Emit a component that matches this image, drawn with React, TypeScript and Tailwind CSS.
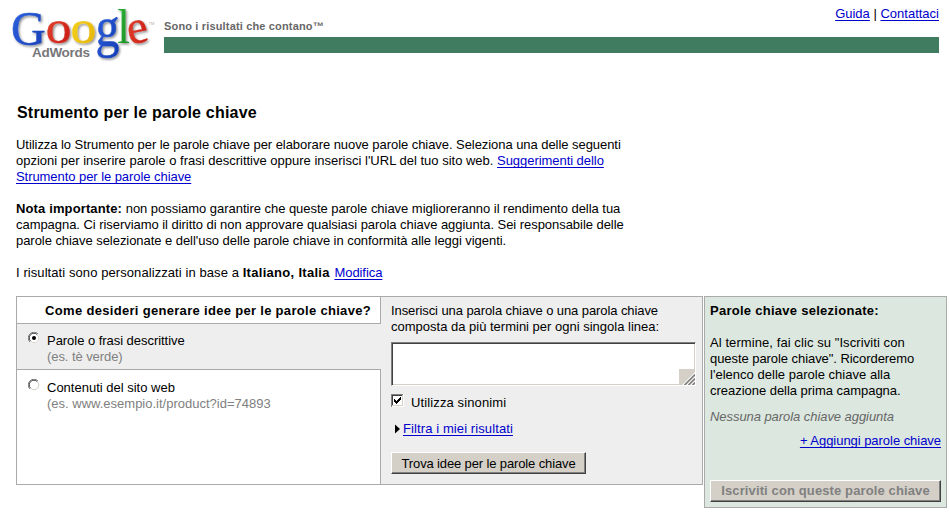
import { ReactNode } from "react";
import clsx from "clsx";

interface LogoLetter {
  char: string;
  color: string;
  stroke: number;
  transform: string;
}

const logoLetters: LogoLetter[] = [
  { char: "G", color: "url(#blue)", stroke: 0.5, transform: "translate(11 44.8) scale(0.98 1)" },
  { char: "o", color: "url(#red)", stroke: 0.4, transform: "translate(45.7 43) scale(1.05 0.96)" },
  { char: "o", color: "url(#yellow)", stroke: 0.4, transform: "translate(70.6 43) scale(1.05 0.96)" },
  { char: "g", color: "url(#blue)", stroke: 0.4, transform: "translate(95.5 46.3) scale(0.98 1.15)" },
  { char: "l", color: "url(#green)", stroke: 0.1, transform: "translate(117.3 43.2) scale(0.93 0.97)" },
  { char: "e", color: "url(#red)", stroke: 0.4, transform: "translate(129.4 44.5) rotate(-11) scale(0.96)" },
];

const gradients = [
  { id: "blue", from: "#3166e2", to: "#143bb4" },
  { id: "red", from: "#ea4a35", to: "#c4160f" },
  { id: "yellow", from: "#fad823", to: "#e4b000" },
  { id: "green", from: "#35b53b", to: "#128d1e" },
];

function Logo() {
  return (
    <svg width="164" height="66" viewBox="0 0 164 66" className="block overflow-visible">
      <defs>
        {gradients.map((g) => (
          <linearGradient id={g.id} key={g.id} x1="0" y1="0" x2="1" y2="1">
            <stop offset="0" stopColor={g.from} />
            <stop offset="1" stopColor={g.to} />
          </linearGradient>
        ))}
        <filter id="shadow" x="-20%" y="-20%" width="150%" height="150%">
          <feDropShadow dx="1.3" dy="1.5" stdDeviation="0.8" floodColor="#000" floodOpacity="0.45" />
        </filter>
      </defs>
      <text
        x="32"
        y="57"
        textLength="58"
        fontSize="13.5"
        fontWeight="bold"
        fill="#77777b"
        fontFamily="Liberation Sans, sans-serif"
      >
        AdWords
      </text>
      <g fontFamily="Liberation Serif, serif" fontSize="49" filter="url(#shadow)">
        {logoLetters.map((letter, index) => (
          <text
            key={index}
            transform={letter.transform}
            fill={letter.color}
            stroke={letter.color}
            strokeWidth={letter.stroke}
          >
            {letter.char}
          </text>
        ))}
      </g>
      <text x="148.5" y="25" fontSize="4" fill="#aaa" fontFamily="Liberation Sans, sans-serif">
        TM
      </text>
    </svg>
  );
}

function TextLink({ children, className }: { children: ReactNode; className?: string }) {
  return (
    <a
      href="#"
      className={clsx(
        "text-[#0000cc] underline decoration-1 underline-offset-2 [text-decoration-skip-ink:none]",
        className
      )}
    >
      {children}
    </a>
  );
}

function Radio({ checked }: { checked?: boolean }) {
  return (
    <svg width="12" height="12" viewBox="0 0 12 12" className="block shrink-0">
      <circle cx="6" cy="6" r="5.5" fill="#fff" />
      <path d="M1.9 10.1A5.5 5.5 0 0 1 10.1 1.9" fill="none" stroke="#808080" />
      <path d="M2.6 9.2A4.5 4.5 0 0 1 9.2 2.6" fill="none" stroke="#404040" />
      <path d="M9.4 2.8A4.5 4.5 0 0 1 2.8 9.4" fill="none" stroke="#d4d0c8" />
      {checked && <circle cx="6" cy="6" r="2" fill="#000" />}
    </svg>
  );
}

interface OptionProps {
  title: string;
  example: string;
  checked?: boolean;
}

function Option({ title, example, checked }: OptionProps) {
  return (
    <label className="flex pl-[11px]">
      <Radio checked={checked} />
      <span className="flex flex-col pt-px pl-[7px] leading-4">
        <span className={clsx(checked && "tracking-[-0.04px]")}>{title}</span>
        <span className={clsx("text-[#808080]", checked && "tracking-[-0.07px]")}>{example}</span>
      </span>
    </label>
  );
}

function Button({ disabled, children }: { disabled?: boolean; children: ReactNode }) {
  return (
    <button
      disabled={disabled}
      className={clsx(
        "block h-[22px] whitespace-nowrap border border-t-white border-l-white border-r-[#404040] border-b-[#404040] bg-[#d4d0c8] text-center leading-[20px] shadow-[inset_-1px_-1px_0_#808080]",
        disabled
          ? "w-[231px] font-bold tracking-[0.12px] text-[#808080]"
          : "w-[195px] pt-px tracking-[-0.13px] text-black"
      )}
    >
      {children}
    </button>
  );
}

function Header() {
  return (
    <header className="flex h-[66px]">
      <Logo />
      <div className="flex w-[775px] flex-col">
        <div className="flex h-[37px] justify-between">
          <span className="pt-[19px] text-[11px] leading-[14px] font-bold tracking-[0.16px] text-[#676767]">
            Sono i risultati che contano™
          </span>
          <span className="pt-[6px] leading-4">
            <TextLink>Guida</TextLink> | <TextLink>Contattaci</TextLink>
          </span>
        </div>
        <div className="h-4 bg-[#407d60]" />
      </div>
    </header>
  );
}

function Intro() {
  return (
    <section className="pt-[38px] pl-4 leading-4 whitespace-nowrap">
      <h1 className="pl-px text-base leading-[18px] font-bold tracking-[0.2px]">Strumento per le parole chiave</h1>
      <p className="pt-[15px]">
        <span className="tracking-[-0.056px]">
          Utilizza lo Strumento per le parole chiave per elaborare nuove parole chiave. Seleziona una delle seguenti
        </span>
        <br />
        <span>opzioni per inserire parole o frasi descrittive oppure inserisci l'URL del tuo sito web. </span>
        <TextLink className="tracking-[-0.05px]">Suggerimenti dello</TextLink>
        <br />
        <TextLink className="tracking-[-0.06px]">Strumento per le parole chiave</TextLink>
      </p>
      <p className="pt-4">
        <b className="tracking-[0.13px]">Nota importante:</b>
        <span className="tracking-[-0.03px]">
          {" "}
          non possiamo garantire che queste parole chiave miglioreranno il rendimento della tua
        </span>
        <br />
        <span className="tracking-[-0.047px]">
          campagna. Ci riserviamo il diritto di non approvare qualsiasi parola chiave aggiunta. Sei responsabile delle
        </span>
        <br />
        <span className="tracking-[-0.05px]">
          parole chiave selezionate e dell'uso delle parole chiave in conformità alle leggi vigenti.
        </span>
      </p>
      <p className="pt-4">
        <span className="tracking-[0.08px]">I risultati sono personalizzati in base a </span>
        <b className="tracking-[0.3px]">Italiano, Italia</b>{" "}
        <TextLink className="ml-px tracking-[-0.06px]">Modifica</TextLink>
      </p>
    </section>
  );
}

function MethodColumn() {
  return (
    <div className="flex w-[364px] flex-col">
      <h2 className="h-[27px] border-r border-b border-[#aaa] bg-white pt-[6px] pr-[9px] text-right leading-4 font-bold tracking-[0.31px]">
        Come desideri generare idee per le parole chiave?
      </h2>
      <div className="h-[45px] pt-2">
        <Option title="Parole o frasi descrittive" example="(es. tè verde)" checked />
      </div>
      <div className="grow border-t border-r border-[#aaa] bg-white pt-[9px]">
        <Option title="Contenuti del sito web" example="(es. www.esempio.it/product?id=74893" />
      </div>
    </div>
  );
}

function KeywordColumn() {
  return (
    <div className="flex flex-col items-start pt-[6px] pl-[10px] leading-4">
      <p>
        <span className="tracking-[-0.085px]">Inserisci una parola chiave o una parola chiave</span>
        <br />
        composta da più termini per ogni singola linea:
      </p>
      <div className="mt-[7px] flex h-[44px] w-[305px] items-end justify-end border border-t-[#808080] border-l-[#808080] border-r-white border-b-white bg-white shadow-[inset_1px_1px_0_#404040,inset_-1px_-1px_0_#d4d0c8]">
        <svg width="16" height="16" viewBox="0 0 16 16">
          <path d="M0 0H16V16H0Z" fill="#d4d0c8" />
          <path d="M4 16L16 4M8 16L16 8M12 16L16 12" stroke="#fff" strokeWidth="1.2" />
          <path d="M5.5 16L16 5.5M9.5 16L16 9.5M13.5 16L16 13.5" stroke="#808080" strokeWidth="1.6" />
        </svg>
      </div>
      <label className="flex pt-[8px]">
        <svg width="13" height="13" viewBox="0 0 13 13" shapeRendering="crispEdges">
          <path d="M0 0H13V13H0Z" fill="#fff" />
          <path d="M0 12.5V.5H12" fill="none" stroke="#808080" />
          <path d="M1.5 11V1.5H11" fill="none" stroke="#404040" />
          <path d="M1 11.5H11.5V1" fill="none" stroke="#d4d0c8" />
          <path d="M3 5h1v1h1v1h1v-1h1v-1h1v-1h1v-1h1v3h-1v1h-1v1h-1v1h-1v1h-1v-1h-1v-1h-1z" fill="#000" />
        </svg>
        <span className="pt-px pl-[7px] tracking-[0.12px]">Utilizza sinonimi</span>
      </label>
      <div className="flex items-center pt-[10px] pl-1">
        <svg width="8" height="10" viewBox="0 0 8 10">
          <path d="M0 .5L5 5L0 9.5Z" fill="#000" />
        </svg>
        <TextLink className="tracking-[0.1px]">Filtra i miei risultati</TextLink>
      </div>
      <div className="pt-[15px]">
        <Button>Trova idee per le parole chiave</Button>
      </div>
    </div>
  );
}

function SelectedPanel() {
  return (
    <aside className="flex h-[212px] w-[243px] flex-col border border-[#aaa] bg-[#dce7df] pt-[6px] pl-[5px] leading-4">
      <h2 className="font-bold tracking-[0.27px]">Parole chiave selezionate:</h2>
      <p className="pt-4">
        <span className="tracking-[0.08px]">Al termine, fai clic su "Iscriviti con</span>
        <br />
        <span className="tracking-[-0.06px]">queste parole chiave". Ricorderemo</span>
        <br />
        <span className="tracking-[0.02px]">l'elenco delle parole chiave alla</span>
        <br />
        <span className="tracking-[-0.03px]">creazione della prima campagna.</span>
      </p>
      <p className="pt-[10px] tracking-[-0.06px] text-[#676767] italic">Nessuna parola chiave aggiunta</p>
      <p className="pt-2 pr-[5px] text-right">
        <TextLink className="tracking-[-0.04px]">+ Aggiungi parole chiave</TextLink>
      </p>
      <div className="pt-[31px]">
        <Button disabled>Iscriviti con queste parole chiave</Button>
      </div>
    </aside>
  );
}

export default function App() {
  return (
    <main className="h-[518px] w-[950px] overflow-hidden bg-white font-['Liberation_Sans',Arial,sans-serif] text-[13px] whitespace-nowrap text-black">
      <Header />
      <Intro />
      <section className="flex items-start gap-px pt-[15px] pl-4">
        <div className="flex h-[189px] w-[687px] border border-[#aaa] bg-[#eee]">
          <MethodColumn />
          <KeywordColumn />
        </div>
        <SelectedPanel />
      </section>
    </main>
  );
}
